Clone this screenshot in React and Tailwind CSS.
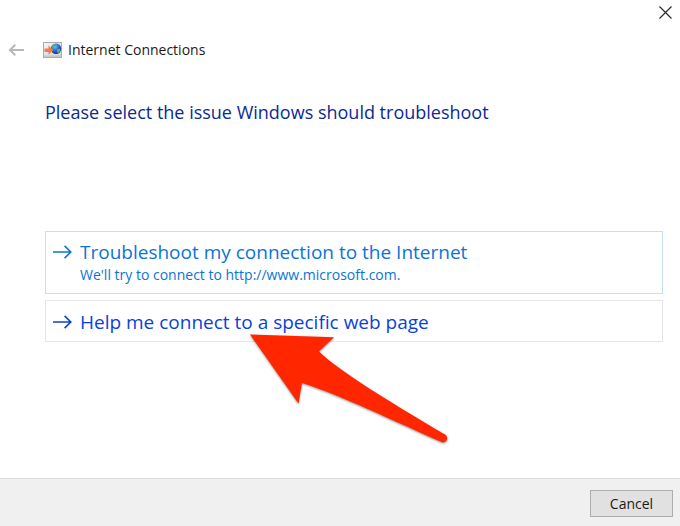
import { useState } from 'react';

const ISSUES = [
  {
    id: 'internet',
    title: 'Troubleshoot my connection to the Internet',
    detail: "We'll try to connect to http://www.microsoft.com.",
    style: 'h-[63px] border-[#c3e0f5] text-[#0c74d4]',
  },
  {
    id: 'webpage',
    title: 'Help me connect to a specific web page',
    style: 'h-[42px] border-[#e6e6e6] text-[#0b3fdc]',
  },
];

function CloseIcon() {
  return (
    <svg width="13" height="13" viewBox="0 0 13 13" fill="none" stroke="#2b2b2b" strokeWidth="1.2" aria-hidden="true">
      <path d="M0.5 0.5 12.5 12.5M12.5 0.5 0.5 12.5" />
    </svg>
  );
}

function BackIcon() {
  return (
    <svg width="16" height="12" viewBox="0 0 16 12" fill="none" stroke="#b8b8b8" strokeWidth="2" aria-hidden="true">
      <path d="M16 6H2M7.3 0.8 2 6l5.3 5.2" />
    </svg>
  );
}

function ConnectionIcon() {
  return (
    <svg width="19" height="16" viewBox="0 0 19 16" aria-hidden="true">
      <defs>
        <linearGradient id="screen" x1="0" y1="0" x2="1" y2="1">
          <stop offset="0" stopColor="#f4f6f7" />
          <stop offset="1" stopColor="#c3d0d8" />
        </linearGradient>
        <radialGradient id="globe" cx="0.4" cy="0.3" r="0.7">
          <stop offset="0" stopColor="#7cc0f4" />
          <stop offset="0.5" stopColor="#2a6fd0" />
          <stop offset="1" stopColor="#132f92" />
        </radialGradient>
      </defs>
      <rect x="0.5" y="0.5" width="18" height="15" fill="url(#screen)" stroke="#a9adb0" />
      <path d="M1 13.5h17V15H1z" fill="#c6c8c8" />
      <circle cx="13" cy="6.8" r="5.2" fill="url(#globe)" />
      <path d="M9.600 4c1.200-1.500 2.800-1.800 4-1.400l-.6 1.600-1.600.6-.4 1.600-1.800.2zM14 7.400l2.600-.8.8 1.400-1.600 3-1.800-.8z" fill="#58b368" />
      <path d="M1.5 6.500h4V3.600l4.800 4.600-4.800 4.600V10h-4z" fill="#f47b4a" />
    </svg>
  );
}

function ForwardIcon() {
  return (
    <svg className="shrink-0" width="19" height="14" viewBox="0 0 19 14" fill="none" stroke="currentColor" strokeWidth="1.6" aria-hidden="true">
      <path d="M0 7h17.6M11.6 0.9 17.8 7l-6.2 6.1" />
    </svg>
  );
}

function PointerArrow() {
  return (
    <svg
      className="pointer-events-none absolute top-8 left-[204px] drop-shadow-[0_1px_1px_rgba(0,0,0,0.45)]"
      width="204"
      height="112"
      viewBox="0 0 204 112"
      aria-hidden="true"
    >
      <path
        d="M1 2.5 85 5.200 70 19.500C89 38 136 67 196 102.500A4 4 0 0 1 192 109.800C130 82 83 60 53 51L49.500 71.500Z"
        fill="#ff2600"
      />
    </svg>
  );
}

function IssueOption({ issue, selected, onSelect, children }) {
  return (
    <div className="relative">
      <button
        type="button"
        aria-pressed={selected}
        onClick={() => onSelect(issue.id)}
        className={`flex w-full flex-col justify-center border bg-white px-[7px] pt-px text-left ${issue.style}`}
      >
        <span className="flex items-center gap-2 text-[19px] leading-6">
          <ForwardIcon />
          {issue.title}
        </span>
        {issue.detail && <span className="pl-[27px] text-sm leading-[22px]">{issue.detail}</span>}
      </button>
      {children}
    </div>
  );
}

function App() {
  const [selected, setSelected] = useState('webpage');

  return (
    <div className="flex min-h-screen flex-col bg-white font-['Open_Sans','Noto_Sans',sans-serif] text-[#1a1a1a]">
      {/* Title bar */}
      <header>
        <div className="flex h-[38px] justify-end px-2 pt-1.5">
          <button type="button" aria-label="Close" className="h-[13px]">
            <CloseIcon />
          </button>
        </div>
        <div className="flex h-6 items-center px-2">
          <button type="button" aria-label="Back" disabled>
            <BackIcon />
          </button>
          <div className="flex items-center gap-1.5 pl-[19px]">
            <ConnectionIcon />
            <span className="text-sm">Internet Connections</span>
          </div>
        </div>
      </header>

      <main className="flex-1 pt-9 pr-[17px] pl-[45px]">
        <h1 className="text-lg leading-7 text-[#0a2a94]">
          Please select the issue Windows should troubleshoot
        </h1>

        {/* Issue choices */}
        <div className="mt-[105px] flex flex-col gap-[6px]">
          {ISSUES.map((issue) => (
            <IssueOption
              key={issue.id}
              issue={issue}
              selected={selected === issue.id}
              onSelect={setSelected}
            >
              {selected === issue.id && <PointerArrow />}
            </IssueOption>
          ))}
        </div>
      </main>

      <footer className="flex h-12 justify-end border-t border-[#dcdcdc] bg-[#f0f0f0] px-[7px] pt-[11px]">
        <button
          type="button"
          className="h-[27px] w-[83px] border border-[#adadad] bg-[#e1e1e1] text-sm leading-6"
        >
          Cancel
        </button>
      </footer>
    </div>
  );
}

export default App;
